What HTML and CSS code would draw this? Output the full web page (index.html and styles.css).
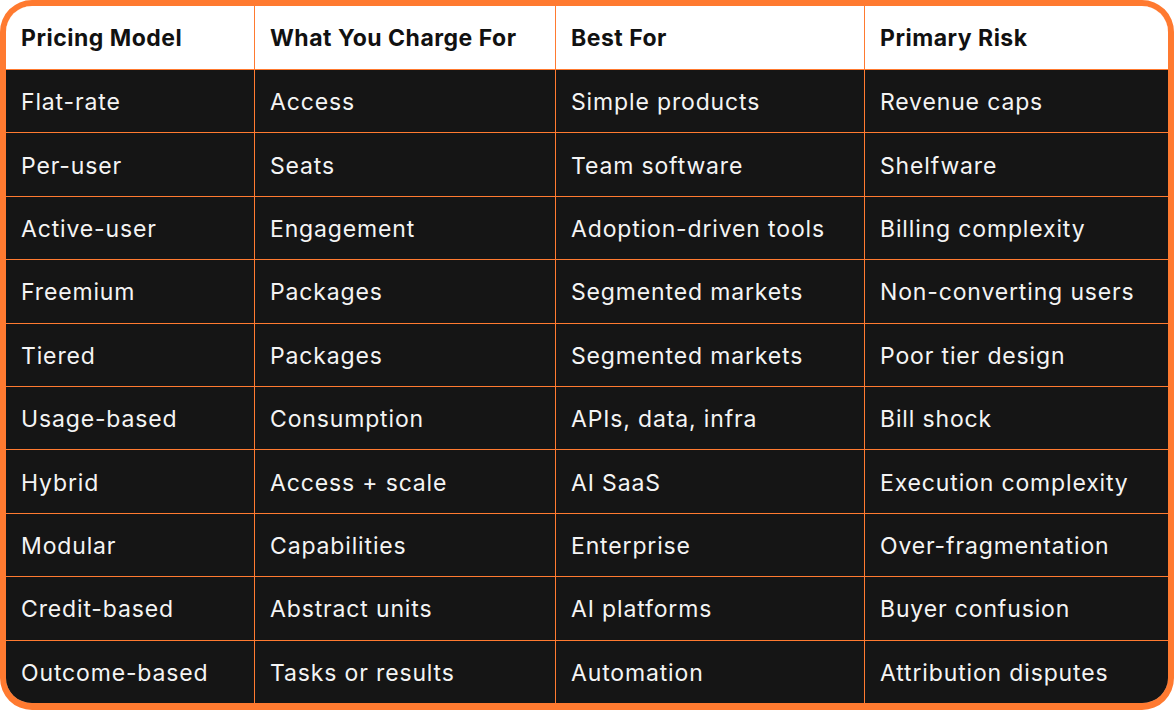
FILE: index.html
```html
<!DOCTYPE html>
<html>
<head>
<meta charset="utf-8">
<link rel="stylesheet" href="styles.css">
</head>
<body>
<div class="frame">
  <div class="grid">
    <div class="cell head">Pricing Model</div>
    <div class="cell head">What You Charge For</div>
    <div class="cell head">Best For</div>
    <div class="cell head">Primary Risk</div>

    <div class="cell">Flat-rate</div><div class="cell">Access</div><div class="cell">Simple products</div><div class="cell">Revenue caps</div>
    <div class="cell">Per-user</div><div class="cell">Seats</div><div class="cell">Team software</div><div class="cell">Shelfware</div>
    <div class="cell">Active-user</div><div class="cell">Engagement</div><div class="cell">Adoption-driven tools</div><div class="cell">Billing complexity</div>
    <div class="cell">Freemium</div><div class="cell">Packages</div><div class="cell">Segmented markets</div><div class="cell">Non-converting users</div>
    <div class="cell">Tiered</div><div class="cell">Packages</div><div class="cell">Segmented markets</div><div class="cell">Poor tier design</div>
    <div class="cell">Usage-based</div><div class="cell">Consumption</div><div class="cell">APIs, data, infra</div><div class="cell">Bill shock</div>
    <div class="cell">Hybrid</div><div class="cell">Access + scale</div><div class="cell">AI SaaS</div><div class="cell">Execution complexity</div>
    <div class="cell">Modular</div><div class="cell">Capabilities</div><div class="cell">Enterprise</div><div class="cell">Over-fragmentation</div>
    <div class="cell">Credit-based</div><div class="cell">Abstract units</div><div class="cell">AI platforms</div><div class="cell">Buyer confusion</div>
    <div class="cell">Outcome-based</div><div class="cell">Tasks or results</div><div class="cell">Automation</div><div class="cell">Attribution disputes</div>
  </div>
</div>
</body>
</html>
```

FILE: styles.css
```css
html, body {
  margin: 0;
  padding: 0;
  background: #ffffff;
}
body {
  width: 1174px;
  height: 711px;
  font-family: "Inter", "Noto Sans", sans-serif;
}
.frame {
  box-sizing: border-box;
  width: 1174px;
  height: 710px;
  border: 6px solid #ff7a30;
  border-bottom-width: 7px;
  border-radius: 32px;
  overflow: hidden;
  background: #ff7a30;
}
.grid {
  display: grid;
  height: 100%;
  grid-template-columns: 248px 300px 308px 1fr;
  grid-template-rows: 63px repeat(10, 1fr);
  gap: 1px;
  background: #ff7a30;
}
.cell {
  display: flex;
  align-items: center;
  padding-left: 15px;
  padding-top: 2px;
  background: #151515;
  color: #f4f4f4;
  font-size: 23px;
  font-weight: 400;
  letter-spacing: 0.85px;
  white-space: nowrap;
}
.cell.head {
  padding-top: 0;
  background: #ffffff;
  color: #111111;
  font-weight: 700;
  letter-spacing: 0.5px;
}
```
